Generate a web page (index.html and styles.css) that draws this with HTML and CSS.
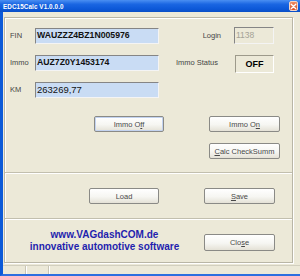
FILE: index.html
```html
<!DOCTYPE html>
<html lang="en">

<head>
    <meta charset="UTF-8">
    <title>EDC15Calc V1.0.0.0</title>
    <link rel="stylesheet" href="styles.css">
</head>

<body>
    <div class="window">
        <div class="titlebar">
            <span class="title">EDC15Calc V1.0.0.0</span>
            <span class="close-box">
                <svg width="7" height="7" viewBox="0 0 7 7">
                    <path d="M1.2 1.2 L5.8 5.8 M5.8 1.2 L1.2 5.8" stroke="#fff" stroke-width="1.3" stroke-linecap="round" />
                </svg>
            </span>
        </div>

        <div class="frame">
            <div class="panel">
                <div class="section top">
                    <div class="fields">
                        <span class="lbl r1">FIN</span>
                        <div class="field bold r1">WAUZZZ4BZ1N005976</div>
                        <span class="lbl right r1">Login</span>
                        <div class="field login">1138</div>

                        <span class="lbl">Immo</span>
                        <div class="field bold">AUZ7Z0Y1453174</div>
                        <span class="lbl right status-lbl">Immo Status</span>
                        <div class="status">OFF</div>

                        <span class="lbl">KM</span>
                        <div class="field">263269,77</div>
                    </div>

                    <div class="btn-grid actions">
                        <button class="btn default">Immo O<u>f</u>f</button>
                        <button class="btn">Immo O<u>n</u></button>
                        <button class="btn second"><u>C</u>alc CheckSumm</button>
                    </div>
                </div>

                <div class="section mid">
                    <div class="btn-grid">
                        <button class="btn">Load</button>
                        <button class="btn"><u>S</u>ave</button>
                    </div>
                </div>

                <div class="section bottom">
                    <div class="brand">
                        www.VAGdashCOM.de<br>
                        innovative automotive software
                    </div>
                    <button class="btn close">Clo<u>s</u>e</button>
                </div>
            </div>

            <div class="statusbar">
                <span class="seg seg-a"></span>
                <span class="seg seg-b"></span>
                <span class="seg seg-c"></span>
            </div>
        </div>
    </div>
</body>

</html>
```

FILE: styles.css
```css
body {
    margin: 0;
    background-color: #ece9d8;
    font-family: "Liberation Sans", Arial, sans-serif;
}

.window {
    width: 300px;
    height: 276px;
    display: flex;
    flex-direction: column;
    background-color: #ece9d8;
    overflow: hidden;
}

.titlebar {
    height: 12px;
    flex-shrink: 0;
    display: flex;
    align-items: center;
    justify-content: space-between;
    padding: 0 2px 0 3px;
    background: linear-gradient(#4a8ff2, #1a66e2 35%, #0c58d8 75%, #0a4fc6);
}

.title {
    color: #ffffff;
    font-weight: bold;
    font-size: 6.3px;
    letter-spacing: 0.1px;
}

.close-box {
    width: 9px;
    height: 10px;
    box-sizing: border-box;
    display: flex;
    align-items: center;
    justify-content: center;
    border: 1px solid #f4d6c8;
    border-radius: 2px;
    background: linear-gradient(#ef8a62, #d9522c);
}

.frame {
    flex: 1;
    display: flex;
    flex-direction: column;
    border-left: 3px solid #0c5ad8;
    border-bottom: 2px solid #2c6fe0;
}

.panel {
    margin: 5px 7px 0 1px;
    height: 246px;
    box-sizing: border-box;
    display: flex;
    flex-direction: column;
    border: 1px solid #b9b6a6;
    box-shadow: inset 1px 1px #ffffff, 1px 1px #ffffff;
}

.section {
    box-sizing: border-box;
}

.top {
    height: 154px;
    padding: 9px 0 0 5px;
}

.mid {
    height: 46px;
    padding-top: 15px;
    border-top: 1px solid #c2bfae;
    box-shadow: inset 0 1px #ffffff;
}

.bottom {
    height: 44px;
    padding-top: 15px;
    display: flex;
    align-items: flex-start;
    border-top: 1px solid #c2bfae;
    box-shadow: inset 0 1px #ffffff;
}

.fields {
    display: grid;
    grid-template-columns: 25px 124px 1fr 40px;
    grid-template-rows: 28px 27px 16px;
    align-items: start;
    padding-right: 18px;
}

.fields .r1 {
    margin-top: 1px;
}

.lbl {
    font-size: 7.5px;
    line-height: 16px;
    color: #454545;
}

.lbl.right {
    text-align: right;
    padding-right: 13px;
}

.status-lbl {
    padding-right: 16px !important;
}

.field {
    height: 16px;
    box-sizing: border-box;
    padding-left: 1px;
    font-size: 9.5px;
    line-height: 13px;
    color: #111111;
    background-color: #c9dcf4;
    border: 1px solid;
    border-color: #858585 #f4f4f4 #f4f4f4 #858585;
    white-space: nowrap;
    overflow: hidden;
}

.field.bold {
    font-weight: bold;
    font-size: 8.7px;
}

.field.login {
    height: 17px;
    line-height: 14px;
    font-size: 8.5px;
    color: #a4a296;
    background-color: #ece9d8;
}

.status {
    height: 18px;
    margin-left: 1px;
    box-sizing: border-box;
    text-align: center;
    font-weight: bold;
    font-size: 9px;
    line-height: 16px;
    color: #000000;
    border: 1px solid;
    border-color: #9d9a8b #ffffff #ffffff #9d9a8b;
}

.btn-grid {
    display: grid;
    grid-template-columns: 70px 71px;
    grid-auto-rows: 16px;
    column-gap: 45px;
    row-gap: 11px;
    margin-left: 84px;
}

.actions {
    margin-top: 18px;
}

.second {
    grid-column: 2;
}

.btn {
    height: 16px;
    padding: 0;
    font-family: "Liberation Sans", Arial, sans-serif;
    font-size: 7.5px;
    color: #484848;
    border: 1px solid #8a8a86;
    border-radius: 2px;
    background: linear-gradient(#ffffff, #f6f6f2 55%, #e4e1d6);
}

.btn u {
    text-underline-offset: 1px;
}

.default {
    box-shadow: inset 0 0 0 1px #c3d3f0;
}

.brand {
    width: 199px;
    margin-top: -5px;
    text-align: center;
    font-weight: bold;
    font-size: 10px;
    line-height: 12px;
    color: #1f1fae;
}

.close {
    width: 71px;
    height: 17px;
}

.statusbar {
    flex: 1;
    margin-top: 2px;
    display: flex;
    border-top: 1px solid #d2cfbf;
}

.seg {
    border-right: 1px solid #c8c5b5;
    box-shadow: 1px 0 #ffffff;
}

.seg-a {
    width: 22px;
}

.seg-b {
    width: 22px;
}

.seg-c {
    flex: 1;
    border-right: none;
}
```
